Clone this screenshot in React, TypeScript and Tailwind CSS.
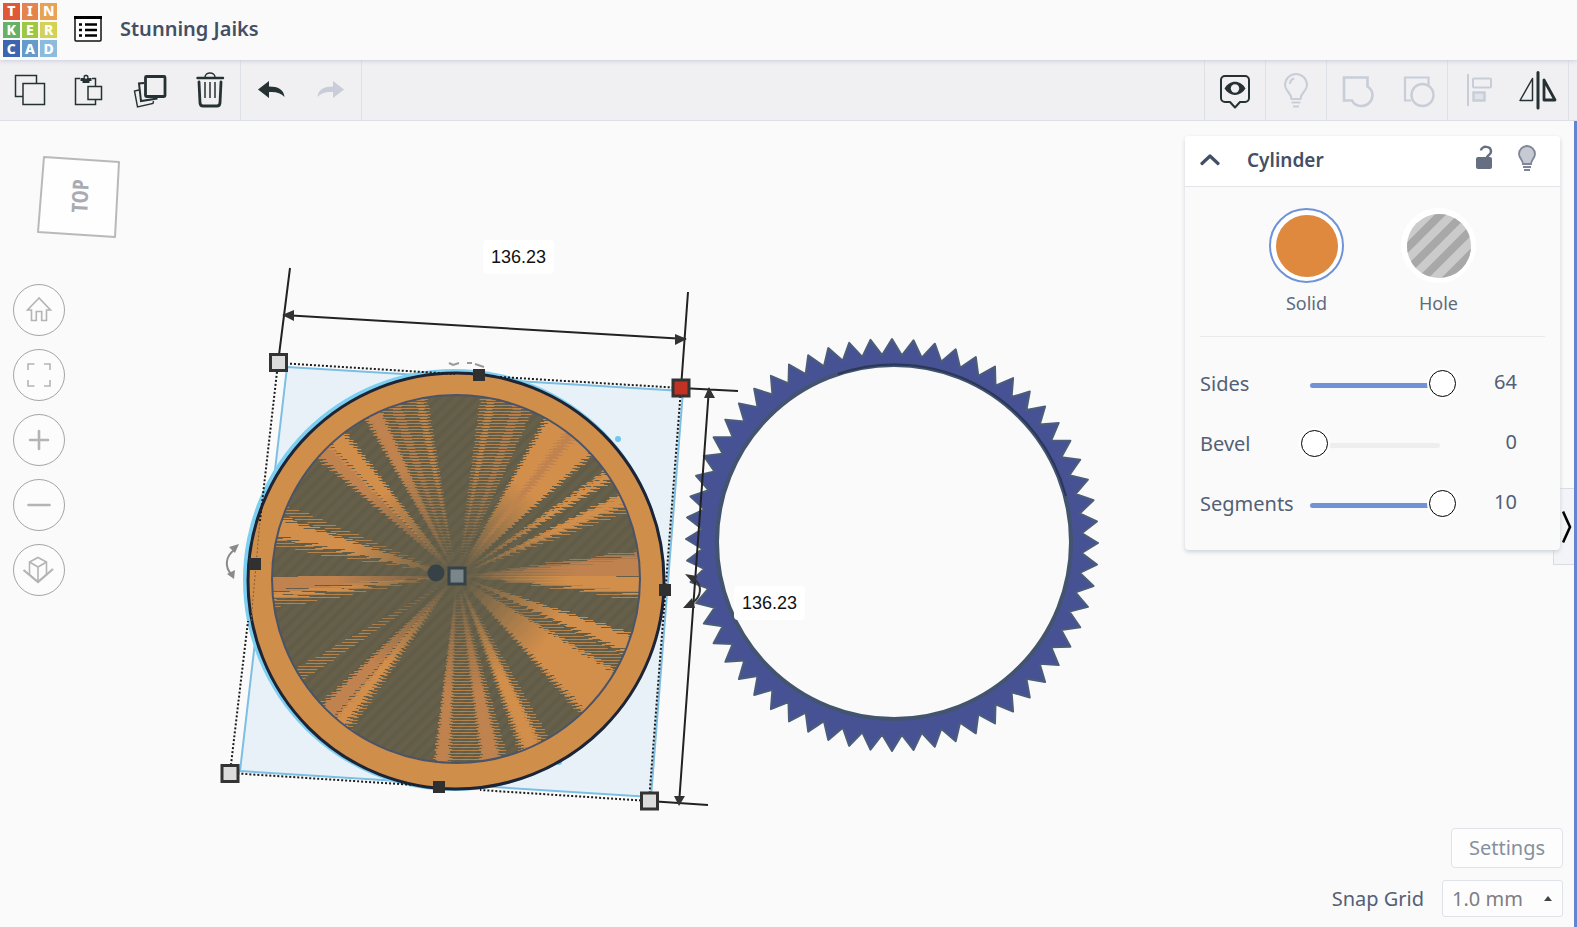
import type { ReactNode } from "react";

const logo = [
  { letter: "T", color: "bg-[#df5838]" },
  { letter: "I", color: "bg-[#e5834c]" },
  { letter: "N", color: "bg-[#e8a254]" },
  { letter: "K", color: "bg-[#65b168]" },
  { letter: "E", color: "bg-[#9ec83f]" },
  { letter: "R", color: "bg-[#d3d254]" },
  { letter: "C", color: "bg-[#3d64b1]" },
  { letter: "A", color: "bg-[#659bcb]" },
  { letter: "D", color: "bg-[#8dbbdc]" },
];

// outline of the gear, seen from slightly below its middle
const gearPoints = Array.from({ length: 120 }, (_, i) => {
  const a = ((i * 3 - 90) * Math.PI) / 180;
  const r = i % 2 === 0 ? 206 : 190;
  const x = 892 + r * Math.cos(a);
  const y = 424 + r * Math.sin(a) - 4 * Math.cos(a) * Math.cos(a) + 2 * Math.cos(a);
  return `${x.toFixed(1)},${y.toFixed(1)}`;
}).join(" ");

// density: how many of every three pixel rows the ray fills
type Ray = { from: number; to: number; density: number; stroke: string };

const ORANGE = "url(#fade)";
const MAUVE = "url(#fadeMauve)";

const rays: Ray[] = [
  { from: 352, to: 359.9, density: 2, stroke: MAUVE },
  { from: 354.5, to: 359.9, density: 3, stroke: MAUVE },
  { from: 0.1, to: 8, density: 1, stroke: ORANGE },
  { from: 0.1, to: 5, density: 3, stroke: ORANGE },
  { from: 19, to: 24, density: 3, stroke: ORANGE },
  { from: 25, to: 32, density: 1, stroke: ORANGE },
  { from: 31.5, to: 46.5, density: 3, stroke: ORANGE },
  { from: 46, to: 49, density: 1, stroke: ORANGE },
  { from: 60, to: 71, density: 1, stroke: ORANGE },
  { from: 64, to: 68.5, density: 3, stroke: ORANGE },
  { from: 74, to: 97.5, density: 1, stroke: ORANGE },
  { from: 77.5, to: 81.5, density: 3, stroke: MAUVE },
  { from: 93, to: 96, density: 3, stroke: MAUVE },
  { from: 124, to: 127, density: 1, stroke: ORANGE },
  { from: 127, to: 131, density: 3, stroke: ORANGE },
  { from: 131, to: 136, density: 3, stroke: MAUVE },
  { from: 145.5, to: 150.5, density: 1, stroke: ORANGE },
  { from: 169.5, to: 174, density: 1, stroke: ORANGE },
  { from: 173.5, to: 175.5, density: 3, stroke: ORANGE },
  { from: 175.5, to: 179.9, density: 3, stroke: MAUVE },
  { from: 188.5, to: 192, density: 1, stroke: ORANGE },
  { from: 192.5, to: 198, density: 3, stroke: ORANGE },
  { from: 199, to: 203, density: 1, stroke: ORANGE },
  { from: 221, to: 226, density: 3, stroke: MAUVE },
  { from: 226, to: 231.5, density: 3, stroke: ORANGE },
  { from: 239, to: 261, density: 1, stroke: ORANGE },
  { from: 241, to: 244.5, density: 3, stroke: MAUVE },
  { from: 249, to: 251.5, density: 2, stroke: MAUVE },
  { from: 257, to: 259, density: 2, stroke: ORANGE },
  { from: 277, to: 295, density: 1, stroke: ORANGE },
  { from: 280, to: 282, density: 2, stroke: ORANGE },
  { from: 288.5, to: 291, density: 2, stroke: MAUVE },
  { from: 300, to: 317.5, density: 3, stroke: ORANGE },
  { from: 307.5, to: 310, density: 3, stroke: MAUVE },
  { from: 324, to: 326, density: 1, stroke: ORANGE },
  { from: 325.5, to: 327.5, density: 3, stroke: ORANGE },
  { from: 333, to: 340, density: 1, stroke: ORANGE },
  { from: 334, to: 336.5, density: 3, stroke: ORANGE },
];

// The two coincident faces flicker row by row, so each ray is cut into
// one-pixel rows whose ends step in and out.
function rayPath(ray: Ray) {
  const below = (ray.from + ray.to) / 2 < 180;
  let d = "";
  for (let i = -188; i <= 192; i++) {
    const row = (i + 300) % 3;
    const dy = i + 0.5;
    if (row >= ray.density || dy > 0 !== below) continue;
    const edge = row * 0.8 + ((i + 300) % 7) * 0.12 - 0.8;
    const ends = [ray.from - edge, ray.to + edge].map((deg) => {
      const low = below ? 0.1 : 180.1;
      const clamped = Math.min(Math.max(deg, low), low + 179.8);
      const x = dy / Math.tan((clamped * Math.PI) / 180);
      return Math.min(Math.max(x, -195), 195);
    });
    d += `M${(457 + ends[0]).toFixed(1)} ${455 + dy}H${(457 + ends[1]).toFixed(1)}`;
  }
  return d;
}

function ToolButton({ label, disabled, children }: { label: string; disabled?: boolean; children: ReactNode }) {
  return (
    <button
      type="button"
      aria-label={label}
      disabled={disabled}
      className={`flex h-full w-[60px] items-center justify-center ${disabled ? "text-[#c8cdd8]" : "text-[#263133]"}`}
    >
      <svg width="40" height="40" viewBox="0 0 40 40" fill="none" stroke="currentColor">
        {children}
      </svg>
    </button>
  );
}

function Header() {
  return (
    <header className="relative z-20 flex h-[60px] items-center bg-[#fafafa] pb-[2px] pl-[3px] shadow-[0_1px_4px_#c9cbdc]">
      <a href="#" aria-label="Tinkercad" className="mt-[2px] grid h-[54px] w-[54px] grid-cols-3 grid-rows-3 gap-[2px]">
        {logo.map((cell) => (
          <span
            key={cell.letter}
            className={`flex items-center justify-center font-['Noto_Sans'] text-[14px] leading-none font-extrabold text-white ${cell.color}`}
          >
            {cell.letter}
          </span>
        ))}
      </a>
      <button type="button" aria-label="Designs" className="ml-[17px]">
        <svg width="28" height="26" viewBox="0 0 28 26">
          <rect x="1" y="1" width="26" height="24" rx="1" fill="#fff" stroke="#111" strokeWidth="1.5" />
          <path d="M0 1.5h28" stroke="#000" strokeWidth="3" />
          <path d="M5 8.500h3M5 14h3M5 19.500h3" stroke="#000" strokeWidth="2.600" />
          <path d="M11 8.500h12M11 14h12M11 19.500h12" stroke="#000" strokeWidth="2.600" />
        </svg>
      </button>
      <h1 className="ml-[18px] text-[20px] leading-[28px] font-semibold text-[#434f64]">Stunning Jaiks</h1>
    </header>
  );
}

function Toolbar() {
  return (
    <div className="relative z-10 flex h-[61px] justify-between border-b border-[#dde1e7] bg-[#f0f0f2] pr-2">
      <div className="flex">
        <div className="flex border-r border-[#dde1e7]">
          <ToolButton label="Copy">
            <path d="M13 26.500H5.500V5.500H26.500V13" strokeWidth="1.500" />
            <rect x="13" y="13.500" width="21.500" height="21" strokeWidth="1.500" />
          </ToolButton>
          <ToolButton label="Paste">
            <path d="M10 8.500H5.500V34.500H25.500V30M22 8.500h3.500V16" strokeWidth="1.500" />
            <path d="M10.500 8h3v-1.500c0-2.500 5-2.500 5 0V8h3v3h-2v2h-7v-2h-2z" fill="currentColor" stroke="none" />
            <circle cx="16" cy="7.500" r="1.200" fill="#f0f0f2" stroke="none" />
            <rect x="18" y="16.500" width="13.500" height="13" strokeWidth="1.500" />
          </ToolButton>
          <ToolButton label="Duplicate">
            <rect x="15.500" y="6.500" width="19.500" height="20" rx="1" strokeWidth="2.800" />
            <path d="M14 13L9 13.500l2 17.500 16.500-2.500" strokeWidth="2" />
            <path d="M9 20l-4.500 1 3 16 15.500-3.500.5-2.500" strokeWidth="1.400" />
          </ToolButton>
          <ToolButton label="Delete">
            <path d="M15 7.500c0-6 10-6 10 0" strokeWidth="1.500" />
            <path d="M7.500 8h25.500" strokeWidth="2.400" strokeLinecap="round" />
            <path d="M9 12l1 21c.2 2 1 3 3 3h14c2 0 2.800-1 3-3l1-21" strokeWidth="2.800" strokeLinecap="round" />
            <path d="M15 12v16M20 12v16M25 12v16" strokeWidth="1.500" />
          </ToolButton>
        </div>
        <div className="flex border-r border-[#dde1e7]">
          <ToolButton label="Undo">
            <path d="M7 19.500L18 11v5.500c9 0 15 3 15.500 10.500-3.500-4-8.500-5.500-15.500-5v6z" fill="currentColor" stroke="none" />
          </ToolButton>
          <ToolButton label="Redo" disabled>
            <path d="M33 19.500L22 11v5.500c-9 0-15 3-15.500 10.500 3.500-4 8.500-5.500 15.500-5v6z" fill="currentColor" stroke="none" />
          </ToolButton>
        </div>
      </div>
      <div className="flex">
        <div className="border-l border-[#dde1e7]">
          <ToolButton label="View options">
            <path
              d="M10 6h20a4 4 0 0 1 4 4v18a4 4 0 0 1-4 4h-5l-5 5.500-5-5.500h-5a4 4 0 0 1-4-4V10a4 4 0 0 1 4-4z"
              strokeWidth="2"
              strokeLinejoin="round"
            />
            <path d="M9.500 18.500c5-9 16-9 21 0-5 8.500-16 8.500-21 0z" fill="currentColor" stroke="none" />
            <circle cx="20" cy="18.500" r="4.200" fill="#f0f0f2" stroke="none" />
          </ToolButton>
        </div>
        <div className="border-l border-[#dde1e7]">
          <ToolButton label="Show all" disabled>
            <path d="M15.500 29c0-6-6.500-8-6.500-14a11 11 0 0 1 22 0c0 6-6.500 8-6.500 14z" strokeWidth="2" />
            <path d="M14 14c0-3 1.500-4.500 4-5.500M15.500 32.500h9M17 36.500h6" strokeWidth="2" />
          </ToolButton>
        </div>
        <div className="flex border-l border-[#dde1e7]">
          <ToolButton label="Group" disabled>
            <path d="M7 7.500h23.500v9c3 2 5 4.500 5 8.500a11 11 0 0 1-11.500 11c-4.500 0-7.500-2.500-9-5.500H7z" strokeWidth="2.600" />
          </ToolButton>
          <ToolButton label="Ungroup" disabled>
            <path d="M14 30.500H8V7.500H31.500V15" strokeWidth="2.200" />
            <circle cx="25.500" cy="25" r="11" strokeWidth="2.400" />
          </ToolButton>
        </div>
        <div className="flex border-l border-r border-[#dde1e7]">
          <ToolButton label="Align" disabled>
            <path d="M10 4v32" strokeWidth="2" />
            <rect x="15" y="8.500" width="18" height="9" rx="1" strokeWidth="2" />
            <rect x="15.500" y="22.500" width="11" height="8" fill="#dfe3ea" strokeWidth="2.500" />
          </ToolButton>
          <ToolButton label="Mirror">
            <path d="M20 2.500v35.500" strokeWidth="3" strokeLinecap="round" />
            <path d="M14.500 8.500v22H2z" strokeWidth="1.500" strokeLinejoin="round" />
            <path d="M26 10v20h11z" strokeWidth="2.800" strokeLinejoin="round" />
          </ToolButton>
        </div>
      </div>
    </div>
  );
}

function Scene() {
  return (
    <svg className="block h-full w-full" aria-label="Workplane">
      <defs>
        <pattern id="hatch" width="9" height="9" patternUnits="userSpaceOnUse" patternTransform="rotate(45)">
          <rect width="4" height="9" fill="#585542" opacity=".3" />
        </pattern>
        <radialGradient id="fade" gradientUnits="userSpaceOnUse" cx="457" cy="455" r="185">
          <stop offset=".08" stopColor="#d28e4b" stopOpacity=".05" />
          <stop offset=".6" stopColor="#d28e4b" />
        </radialGradient>
        <radialGradient id="fadeMauve" gradientUnits="userSpaceOnUse" cx="457" cy="455" r="185">
          <stop offset=".08" stopColor="#c0824e" stopOpacity=".05" />
          <stop offset=".65" stopColor="#c0824e" />
        </radialGradient>
        <clipPath id="face">
          <ellipse cx="456" cy="458" rx="184" ry="184" />
        </clipPath>
      </defs>

      <polygon points={gearPoints} fill="#465294" stroke="#4b5d78" strokeWidth="2" strokeLinejoin="round" />
      <circle cx="894" cy="421" r="177" fill="#fafafa" stroke="#43546f" strokeWidth="4" />
      <path d="M838 253A177 177 0 0 1 1066 375" fill="none" stroke="#2b365c" strokeWidth="2" />

      <polygon points="287,246 683,270 651,676 240,650" fill="#e8f1f8" stroke="#7cbfe3" strokeWidth="2" />
      <circle cx="454" cy="459" r="211" fill="#7ccff0" />
      <circle cx="618" cy="318" r="3" fill="#6cc9f0" />
      <circle cx="559" cy="641" r="3" fill="#6cc9f0" />
      <circle cx="456" cy="460" r="208" fill="#d08e4b" stroke="#1c2436" strokeWidth="3" />
      <g clipPath="url(#face)">
        <rect x="270" y="270" width="380" height="380" fill="#665f4a" />
        <rect x="270" y="270" width="380" height="380" fill="url(#hatch)" />
        {rays.map((ray) => (
          <path
            key={`${ray.from}-${ray.density}`}
            d={rayPath(ray)}
            stroke={ray.stroke}
            strokeWidth="1"
            opacity={ray.density === 3 ? 1 : 0.75}
            fill="none"
          />
        ))}
      </g>
      <circle cx="456" cy="458" r="184" fill="none" stroke="#4a5468" strokeWidth="2" />

      <path d="M278 242L455 253M500 256L681 267M681 267L665 475M665 475L649 680M649 680L480 669M415 664L230 652M230 652L248 500M260 400L278 242" fill="none" stroke="#1d1d1d" strokeWidth="2" strokeDasharray="2 2" />
      <path d="M251 500L260 400" stroke="#8a5c31" strokeWidth="1" strokeDasharray="2 2" />
      <g stroke="#222" strokeWidth="2">
        <path d="M278 242L290 147M681 267L688 171M283 194L686 218" />
        <path d="M681 267L738 270M649 680L708 684M709 267L679 683" />
      </g>
      <g fill="#333">
        <path d="M282 194L294 189V200zM687 218L675 213V224z" />
        <path d="M709 266L704 277H715zM679 685L674 675H685z" />
        <path d="M685 453L697 455 694 463zM683 487L692 477 695 487z" />
      </g>
      <path d="M695 459C702 464 702 476 692 482" fill="none" stroke="#333" strokeWidth="2" />
      <g fill="#8a8a8a">
        <path d="M239 423L229 426 235 432zM227 453L235 449 234 458z" />
        <path d="M234 429C225 436 225 446 231 453" fill="none" stroke="#8a8a8a" strokeWidth="2" />
        <path d="M449 242l4 2 6-2M467 242h5M475 243l9 3" fill="none" stroke="#999" strokeWidth="2" />
      </g>

      <g fill="#dcdcdc" stroke="#333" strokeWidth="3">
        <rect x="270.500" y="233.500" width="16" height="16" />
        <rect x="222" y="644.500" width="16" height="16" />
        <rect x="641.500" y="672" width="16" height="16" />
        <rect x="673" y="259" width="16" height="16" fill="#c23224" />
        <rect x="449" y="447" width="16" height="16" fill="#7a8689" stroke="#354247" />
      </g>
      <circle cx="436" cy="452" r="8.500" fill="#374246" />
      <g fill="#303030">
        <rect x="473" y="248" width="12" height="12" />
        <rect x="249" y="437" width="12" height="12" />
        <rect x="659" y="463" width="12" height="12" />
        <rect x="433" y="660" width="12" height="12" />
      </g>
    </svg>
  );
}

function RoundButton({ label, children }: { label: string; children: ReactNode }) {
  return (
    <button
      type="button"
      aria-label={label}
      className="flex size-[52px] items-center justify-center rounded-full border border-[#a5a5a8] bg-[#fcfcfc]"
    >
      <svg width="34" height="34" viewBox="0 0 34 34" fill="none" stroke="#b4b4b6" strokeWidth="1.600">
        {children}
      </svg>
    </button>
  );
}

function ViewControls() {
  return (
    <nav className="relative flex flex-col items-start gap-[13px] pl-[13px]">
      <button type="button" aria-label="View cube, top" className="h-[150px]">
        <svg width="113" height="150" viewBox="13 0 113 150">
          <polygon points="44,36 119,41 115,116 38,111" fill="#fefefe" stroke="#b9b9bb" strokeWidth="2" strokeLinejoin="round" />
          <text
            x="79"
            y="75"
            transform="rotate(-87 79 75)"
            textAnchor="middle"
            dominantBaseline="central"
            fontFamily="Open Sans Condensed, Liberation Sans Narrow, Roboto, sans-serif"
            fontSize="22"
            fontWeight="700"
            fill="#a9abb2"
          >
            TOP
          </text>
        </svg>
      </button>
      <RoundButton label="Home view">
        <path d="M17 5L5.500 17H9.500V27.500h4.800V18.500h5.400v9h4.800V17h4z" />
      </RoundButton>
      <RoundButton label="Fit view">
        <path d="M6 12V6h6.500M22 6h6v6M28 22v6h-6M12.500 28H6v-6" />
      </RoundButton>
      <RoundButton label="Zoom in">
        <path d="M17 8v18M8 17h18" strokeWidth="2.600" strokeLinecap="round" />
      </RoundButton>
      <RoundButton label="Zoom out">
        <path d="M6.500 17h21" strokeWidth="2.600" strokeLinecap="round" />
      </RoundButton>
      <RoundButton label="Orthographic view">
        <path d="M16 4.500l8.500 4.500v12.500L16 29l-8.500-7.500V9zM7.500 9l8.500 5 8.500-5M16 14v15" />
        <path d="M1.500 17L16 29l15-13" strokeWidth="2.200" />
      </RoundButton>
    </nav>
  );
}

function Slider({ label, value, max, track }: { label: string; value: number; max: number; track: string }) {
  const id = label.toLowerCase();
  return (
    <div className="flex h-[60px] items-center text-[20px] leading-[28px] text-[#536075]">
      <label htmlFor={id} className="w-[101px]">
        {label}
      </label>
      <div className="grid w-[155px] items-center pb-[2px]">
        <span className={`col-start-1 row-start-1 mt-1 mr-4 ml-[9px] h-[5px] rounded-full ${track}`} />
        <input
          id={id}
          type="range"
          min={0}
          max={max}
          defaultValue={value}
          className="relative col-start-1 row-start-1 h-[27px] w-full cursor-pointer appearance-none bg-transparent [&::-webkit-slider-thumb]:size-[27px] [&::-webkit-slider-thumb]:appearance-none [&::-webkit-slider-thumb]:rounded-full [&::-webkit-slider-thumb]:border [&::-webkit-slider-thumb]:border-black [&::-webkit-slider-thumb]:bg-white [&::-webkit-slider-thumb]:shadow-[0_0_0_2px_#fff]"
        />
      </div>
      <output htmlFor={id} className="flex-1 pr-7 pb-1 text-right">
        {value}
      </output>
    </div>
  );
}

function Inspector() {
  return (
    <section className="relative z-10 w-[375px] rounded-[4px] bg-[#fafafa] shadow-[0_2px_4px_#ccd1d8]">
      <div className="flex h-[51px] items-center rounded-t-[4px] border-b border-[#e2e4e8] bg-white pr-[23px] pb-[2px] pl-[15px]">
        <button type="button" aria-label="Collapse">
          <svg width="20" height="14" viewBox="0 0 20 14" fill="none" stroke="#434f64" strokeWidth="3.200" strokeLinecap="round" strokeLinejoin="round">
            <path d="M2 10.500L10 3l8 7.500" />
          </svg>
        </button>
        <h2 className="ml-[27px] flex-1 text-[19px] leading-[28px] font-semibold text-[#434f64]">Cylinder</h2>
        <button type="button" aria-label="Lock" className="pb-[6px]">
          <svg width="18" height="26" viewBox="0 0 18 26">
            <rect x="1" y="13" width="16" height="12" rx="2" fill="#666f82" />
            <path d="M6 6.500c.5-5 10-5 10 1 0 4-4.500 3.500-4.500 7" fill="none" stroke="#666f82" strokeWidth="2.500" />
          </svg>
        </button>
        <button type="button" aria-label="Hide" className="ml-6 pb-[2px]">
          <svg width="20" height="28" viewBox="0 0 20 28" stroke="#7d8596">
            <path d="M6 19c0-4-4-6-4-10a8 8 0 0 1 16 0c0 4-4 6-4 10z" fill="#c7cad2" strokeWidth="1.800" />
            <path d="M6 22h8M7 25h6" strokeWidth="2" />
          </svg>
        </button>
      </div>
      <div className="px-[15px] pb-4">
        <div className="flex justify-center gap-[57px] border-b border-[#e9eaec] pt-[21px] pb-[20px] text-[18px] leading-[26px] text-[#606b7d]">
          <button type="button" className="flex w-[75px] flex-col items-center gap-[7px]">
            <span className="flex size-[75px] items-center justify-center rounded-full border-2 border-[#6f93d8] bg-white">
              <span className="size-[62px] rounded-full bg-[#de893d]" />
            </span>
            Solid
          </button>
          <button type="button" className="flex w-[75px] flex-col items-center gap-[7px]">
            <span className="flex size-[75px] items-center justify-center rounded-full bg-white">
              <svg width="64" height="64" viewBox="0 0 64 64">
                <clipPath id="hole">
                  <circle cx="32" cy="32" r="32" />
                </clipPath>
                <g clipPath="url(#hole)">
                  <rect width="64" height="64" fill="#cbcbcb" />
                  <path d="M-6 40L38 -4M-2 59L56 1M11 69L69 11M29 75L75 29" stroke="#a8a8a8" strokeWidth="8" />
                </g>
              </svg>
            </span>
            Hole
          </button>
        </div>
        <div className="pt-[17px]">
          <Slider label="Sides" value={64} max={64} track="bg-[#7193d6]" />
          <Slider label="Bevel" value={0} max={10} track="bg-[#eeeeee]" />
          <Slider label="Segments" value={10} max={10} track="bg-[#7193d6]" />
        </div>
      </div>
    </section>
  );
}

function App() {
  return (
    <div className="flex min-h-screen flex-col bg-[#fafafa] font-['Noto_Sans',sans-serif]">
      <Header />
      <Toolbar />
      <main className="relative flex flex-1 justify-between border-r-[3px] border-[#6484d0]">
        <div className="absolute inset-0 overflow-hidden">
          <Scene />
          <input
            aria-label="Width"
            defaultValue="136.23"
            className="absolute top-[119px] left-[483px] h-[34px] w-[71px] rounded-[4px] bg-white text-center font-['Liberation_Sans',sans-serif] text-[18px] text-[#111]"
          />
          <input
            aria-label="Length"
            defaultValue="136.23"
            className="absolute top-[465px] left-[734px] h-[34px] w-[71px] rounded-[4px] bg-white text-center font-['Liberation_Sans',sans-serif] text-[18px] text-[#111]"
          />
        </div>
        <ViewControls />
        <button
          type="button"
          aria-label="Toggle shape panel"
          className="absolute top-[367px] right-0 flex h-[77px] w-[21px] items-center justify-end border border-r-0 border-[#d9dde3] bg-[#f3f4f7] pr-[2px]"
        >
          <svg width="10" height="34" viewBox="0 0 10 34" fill="none" stroke="#000" strokeWidth="2.600">
            <path d="M1 1.500L8 17 1 32.500" />
          </svg>
        </button>
        <div className="relative flex flex-col items-end justify-between pt-[15px] pr-[14px] pb-[10px]">
          <Inspector />
          <div className="-mr-[3px] flex flex-col items-end gap-3 text-[20px] leading-[28px]">
            <button type="button" className="h-10 w-28 rounded-[4px] border border-[#dfe2e8] bg-[#fdfdfd] text-[#878f9e]">
              Settings
            </button>
            <div className="flex items-center">
              <label htmlFor="snap" className="mr-[18px] text-[#536075]">
                Snap Grid
              </label>
              <div className="grid items-center">
                <select
                  id="snap"
                  className="col-start-1 row-start-1 h-[37px] w-[121px] appearance-none rounded-[3px] border border-[#dfe2e8] bg-[#fdfdfd] pl-[9px] text-[#7e7e82]"
                >
                  <option>1.0 mm</option>
                  <option>0.5 mm</option>
                </select>
                <svg className="pointer-events-none col-start-1 row-start-1 mr-[11px] justify-self-end" width="8" height="5" viewBox="0 0 8 5">
                  <path d="M4 0l4 5H0z" fill="#444" />
                </svg>
              </div>
            </div>
          </div>
        </div>
      </main>
    </div>
  );
}

export default App;
